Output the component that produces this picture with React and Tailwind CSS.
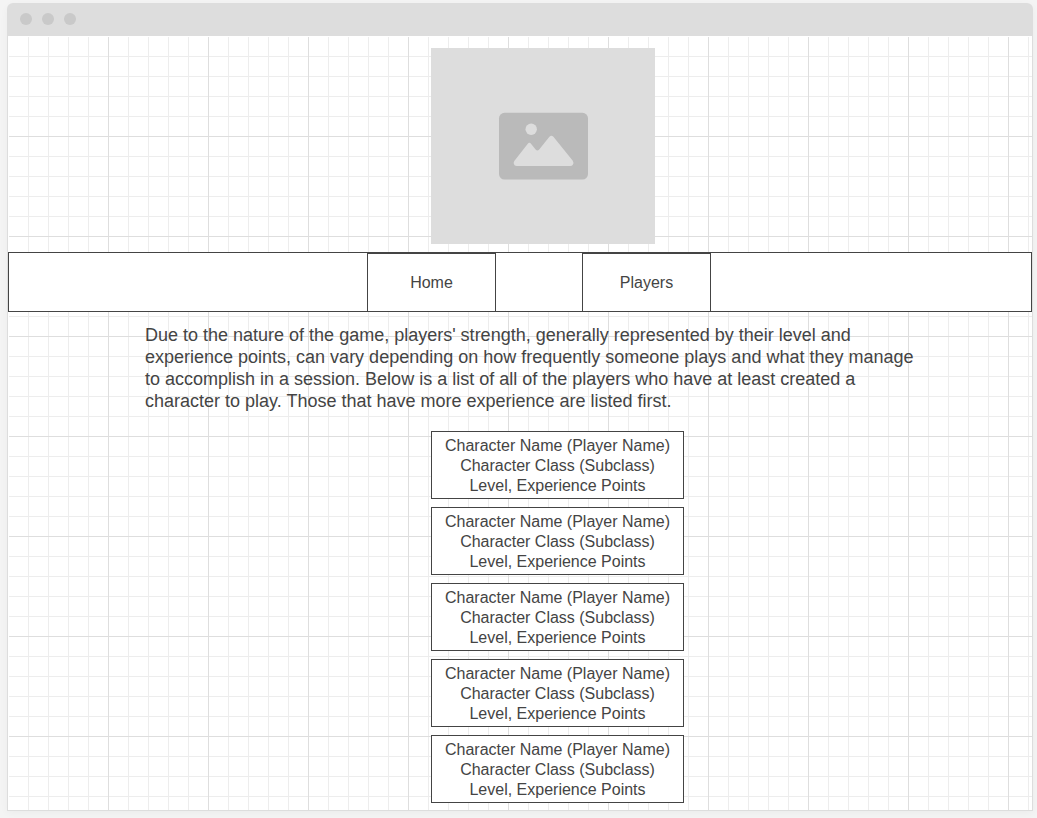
const players = [1, 2, 3, 4, 5];

const gridLines =
  "bg-[linear-gradient(to_right,transparent_99px,#dedede_99px),linear-gradient(to_bottom,transparent_99px,#dedede_99px),linear-gradient(to_right,transparent_19px,#ededed_19px),linear-gradient(to_bottom,transparent_19px,#ededed_19px)] bg-[size:100px_100px,100px_100px,20px_20px,20px_20px] bg-origin-content bg-clip-content";

function ImagePlaceholder() {
  return (
    <div className="flex h-[196px] w-56 items-center justify-center bg-[#ddd]">
      <svg viewBox="0 0 90 68" className="h-[68px] w-[90px]" role="img" aria-label="Image placeholder">
        <rect x="1" y="0.8" width="89" height="66.8" rx="5.5" fill="#bababa" />
        <circle cx="33.2" cy="17.3" r="5.7" fill="#ddd" />
        <path
          d="M16.3 49 L29.6 31.9 Q31.4 29.7 33.2 31.9 L37.6 37.6 Q39.3 39.6 41.2 37.6 L51.4 24.8 Q53.4 22.6 55.4 24.8 L74.6 48.6 Q76.2 51 74.8 52.8 Q74 54 72.2 54 L18.6 54 Q16.5 54 15.8 52 Q15.4 50.4 16.3 49 Z"
          fill="#ddd"
        />
      </svg>
    </div>
  );
}

function NavLink({ children }) {
  return (
    <a
      href="#"
      className="flex h-[58px] w-[129px] items-center justify-center border border-b-0 border-[#444] bg-white text-base text-[#444]"
    >
      {children}
    </a>
  );
}

function PlayerCard() {
  return (
    <li className="flex h-[68px] w-[253px] flex-col justify-center border border-[#444] bg-white pt-0.5 text-center text-base leading-5">
      <p>Character Name (Player Name)</p>
      <p>Character Class (Subclass)</p>
      <p>Level, Experience Points</p>
    </li>
  );
}

export default function App() {
  return (
    <div className="min-h-screen bg-[#f4f4f4] pt-[3px] pr-1 pb-[7px] pl-[7px] font-['Liberation_Sans',Arial,sans-serif] text-[#444]">
      <div className="rounded-t-lg shadow-[0_2px_8px_rgba(0,0,0,0.04)]">
        <header className="flex h-[33px] items-center gap-2.5 rounded-t-md bg-[#ddd] px-[13px] pb-px">
          <span className="size-3 rounded-full bg-[#c9c9c9]" />
          <span className="size-3 rounded-full bg-[#c9c9c9]" />
          <span className="size-3 rounded-full bg-[#c9c9c9]" />
        </header>
        <div className="border border-t-0 border-[#ddd] bg-white">
          <div className={`pt-px pl-px ${gridLines}`}>
            <div className="flex justify-center pt-[11px] pb-2 pl-[45px]">
              <ImagePlaceholder />
            </div>
            <nav className="-ml-px flex justify-center gap-[86px] border border-[#444] bg-white pl-[38px]">
              <NavLink>Home</NavLink>
              <NavLink>Players</NavLink>
            </nav>
            <main className="pb-[7px]">
              <div className="flex justify-center pt-3 pl-[35px]">
                <p className="w-full max-w-[786px] text-lg leading-[22px]">
                  Due to the nature of the game, players' strength, generally represented by their level and
                  experience points, can vary depending on how frequently someone plays and what they manage
                  to accomplish in a session. Below is a list of all of the players who have at least created a
                  character to play. Those that have more experience are listed first.
                </p>
              </div>
              <ul className="flex flex-col items-center gap-2 pt-[19px] pl-[74px]">
                {players.map((id) => (
                  <PlayerCard key={id} />
                ))}
              </ul>
            </main>
          </div>
        </div>
      </div>
    </div>
  );
}
